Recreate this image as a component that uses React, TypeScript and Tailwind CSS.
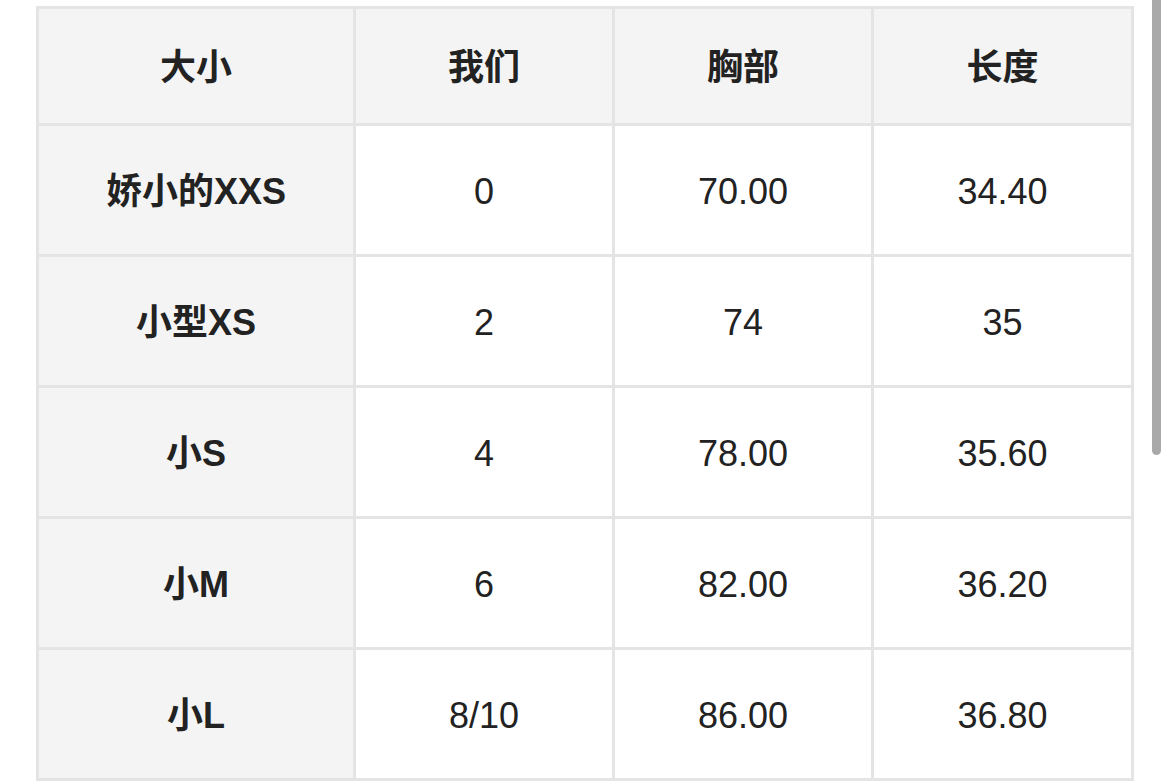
import React from 'react';

const rows = [
  { size: '娇小的XXS', us: '0', chest: '70.00', length: '34.40' },
  { size: '小型XS', us: '2', chest: '74', length: '35' },
  { size: '小S', us: '4', chest: '78.00', length: '35.60' },
  { size: '小M', us: '6', chest: '82.00', length: '36.20' },
  { size: '小L', us: '8/10', chest: '86.00', length: '36.80' },
];

const font = { fontFamily: '"Liberation Sans", "Noto Sans CJK SC", sans-serif' };

export default function App() {
  return (
    <div className="relative min-h-[784px] w-[1170px] overflow-hidden bg-white" style={font}>
      <div className="pl-[36px] pt-[6px]">
        <table className="w-[1095px] table-fixed border-collapse border-[3px] border-[#e4e4e4] text-center text-[36px] text-[#222]">
          <colgroup>
            <col className="w-[317px]" />
            <col className="w-[259px]" />
            <col className="w-[259px]" />
            <col className="w-[260px]" />
          </colgroup>
          <thead>
            <tr className="h-[117px] bg-[#f4f4f4] font-bold">
              <th className="border-[3px] border-[#e4e4e4] pt-[4px]">大小</th>
              <th className="border-[3px] border-[#e4e4e4] pt-[4px]">我们</th>
              <th className="border-[3px] border-[#e4e4e4] pt-[4px]">胸部</th>
              <th className="border-[3px] border-[#e4e4e4] pt-[4px]">长度</th>
            </tr>
          </thead>
          <tbody>
            {rows.map((r) => (
              <tr key={r.size} className="h-[131px]">
                <td className="border-[3px] border-[#e4e4e4] bg-[#f4f4f4] pt-[4px] font-bold">{r.size}</td>
                <td className="border-[3px] border-[#e4e4e4] pt-[4px]">{r.us}</td>
                <td className="border-[3px] border-[#e4e4e4] pt-[4px]">{r.chest}</td>
                <td className="border-[3px] border-[#e4e4e4] pt-[4px]">{r.length}</td>
              </tr>
            ))}
          </tbody>
        </table>
      </div>
      {/* scrollbar */}
      <div className="absolute left-[1152px] top-0 h-[455px] w-[9px] rounded-b-full bg-[#a9a9a9]" />
    </div>
  );
}
